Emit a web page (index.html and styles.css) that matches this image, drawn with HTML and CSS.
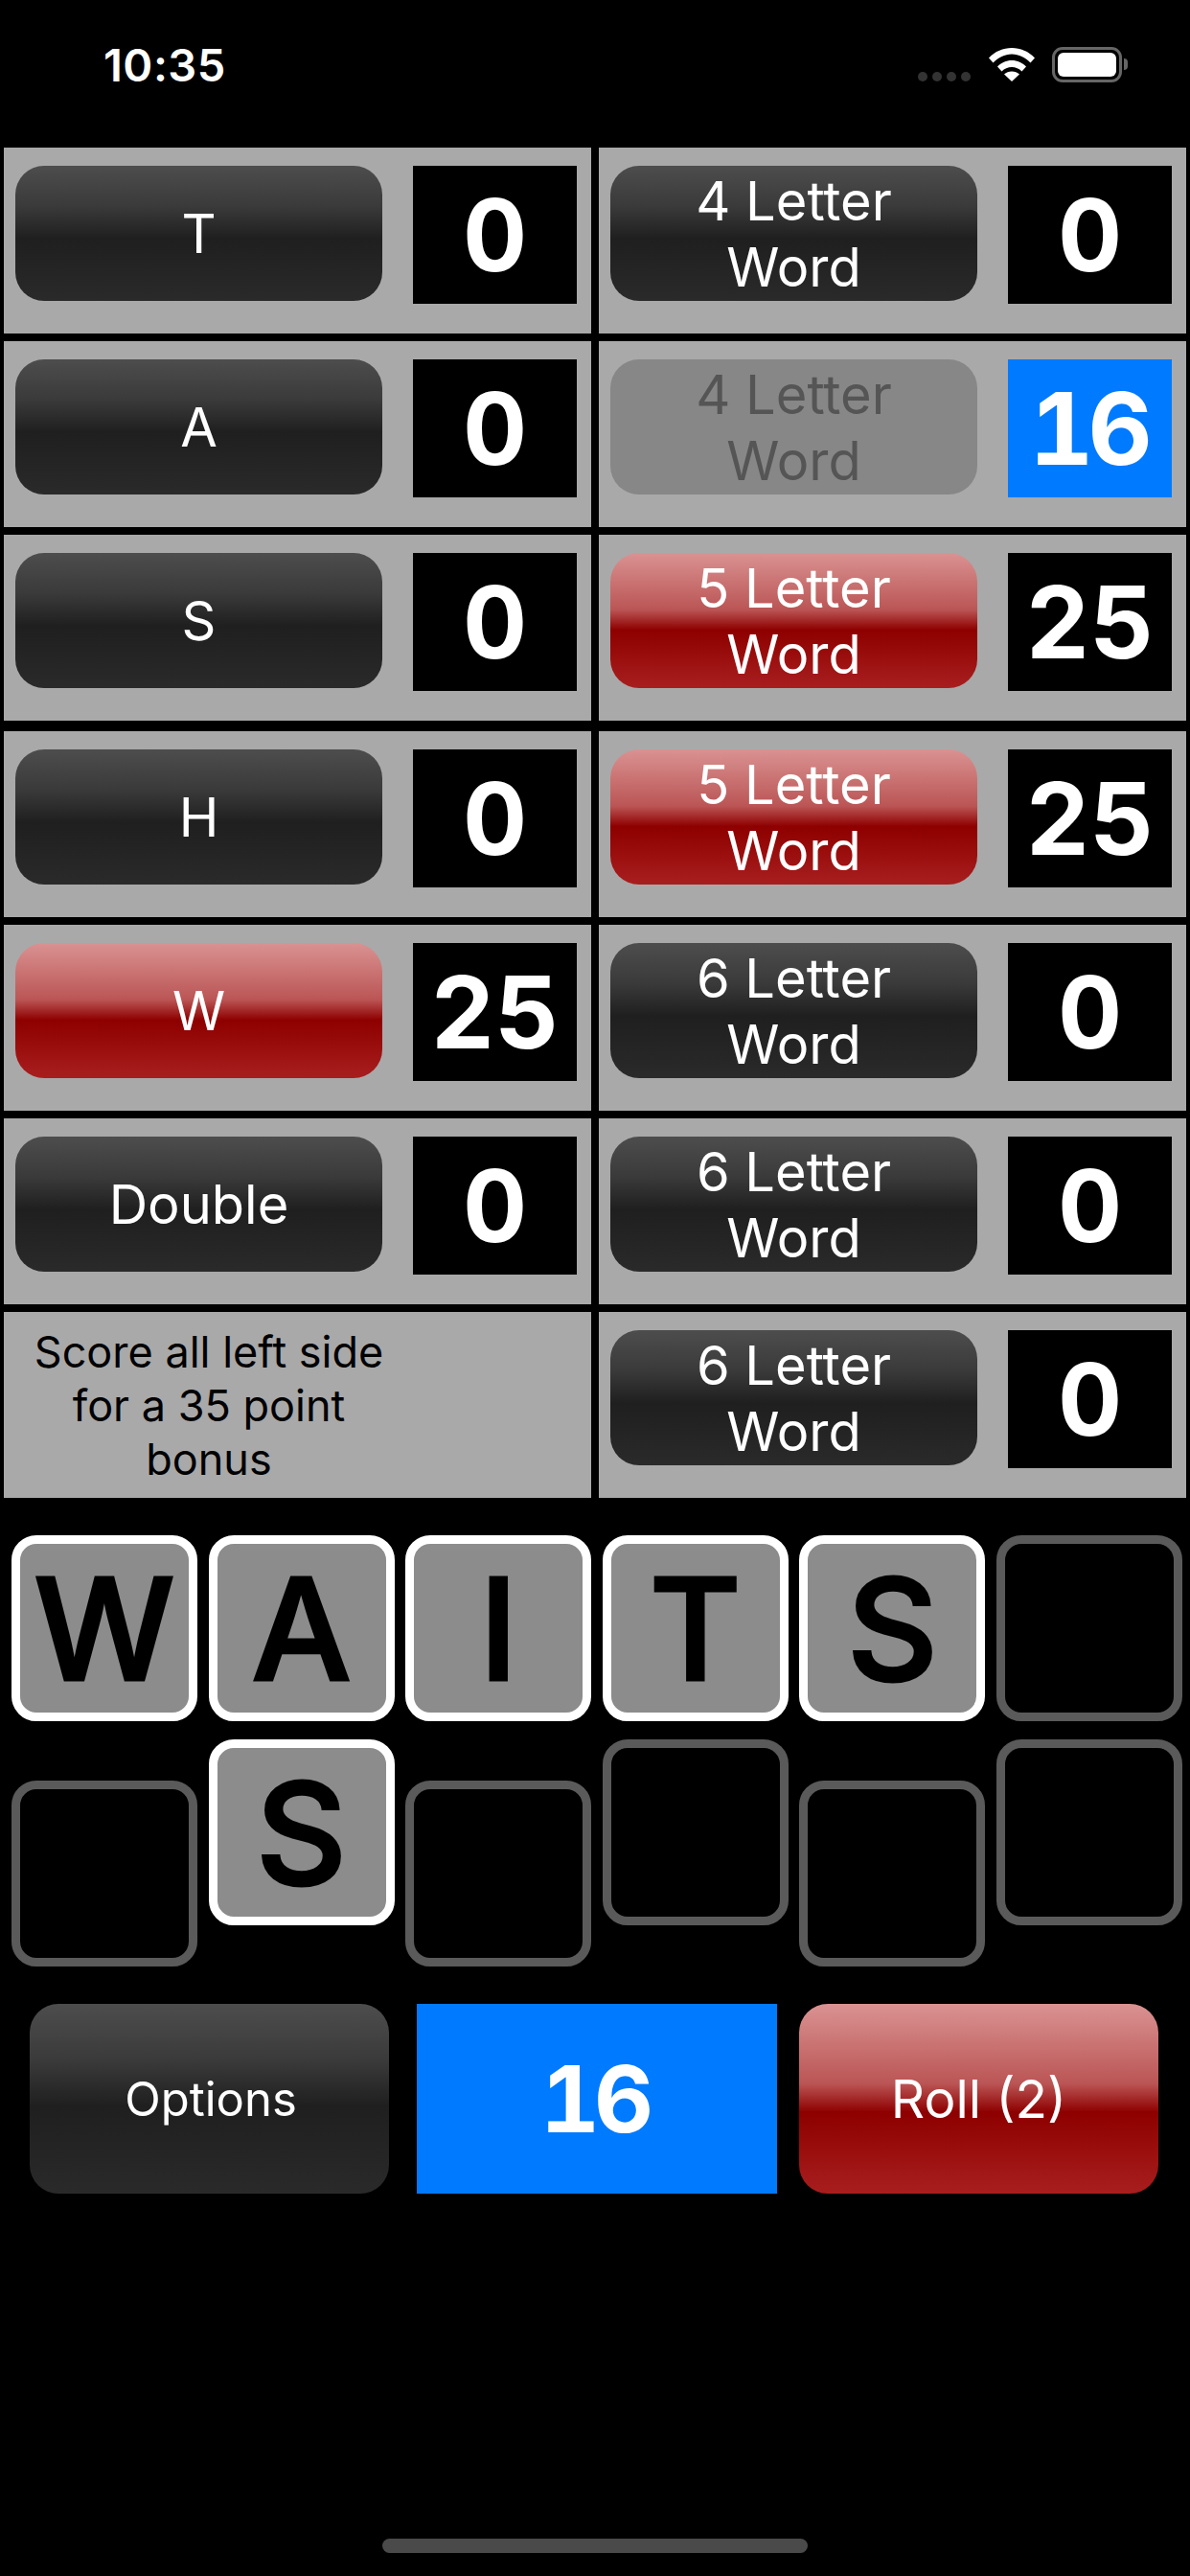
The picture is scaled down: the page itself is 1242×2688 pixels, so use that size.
FILE: index.html
```html
<!DOCTYPE html>
<html lang="en">
<head>
    <meta charset="UTF-8">
    <title>Dice Word Game</title>
    <link rel="stylesheet" href="styles.css">
</head>
<body>
    <header class="status-bar">
        <span class="clock">10:35</span>
        <div class="status-icons">
            <div class="signal"><i></i><i></i><i></i><i></i></div>
            <svg class="wifi" width="48" height="36" viewBox="0 0 48 36">
                <path d="M0 11.5C6.5 4.500 15 1 24 1s17.500 3.500 24 10.500l-4.500 5C38 11 31.500 7.500 24 7.500S10 11 4.500 16.500z" fill="#fff"/>
                <path d="M9 20.500c4-4 9.200-6.500 15-6.500s11 2.500 15 6.500l-4.500 5c-2.800-2.800-6.500-4.500-10.500-4.500s-7.700 1.700-10.500 4.500z" fill="#fff"/>
                <path d="M24 36l-8-7.500c2.200-2 5-3 8-3s5.800 1 8 3z" fill="#fff"/>
            </svg>
            <div class="battery"><div class="battery-level"></div></div>
            <div class="battery-cap"></div>
        </div>
    </header>

    <main class="board">
        <div class="cell"><button class="btn dark">T</button><div class="score">0</div></div>
        <div class="cell"><button class="btn dark">4 Letter<br>Word</button><div class="score">0</div></div>

        <div class="cell"><button class="btn dark">A</button><div class="score">0</div></div>
        <div class="cell"><button class="btn disabled">4 Letter<br>Word</button><div class="score blue">16</div></div>

        <div class="cell"><button class="btn dark">S</button><div class="score">0</div></div>
        <div class="cell"><button class="btn red">5 Letter<br>Word</button><div class="score">25</div></div>

        <div class="cell drop"><button class="btn dark">H</button><div class="score">0</div></div>
        <div class="cell drop"><button class="btn red">5 Letter<br>Word</button><div class="score">25</div></div>

        <div class="cell"><button class="btn red">W</button><div class="score">25</div></div>
        <div class="cell"><button class="btn dark">6 Letter<br>Word</button><div class="score">0</div></div>

        <div class="cell"><button class="btn dark">Double</button><div class="score">0</div></div>
        <div class="cell"><button class="btn dark">6 Letter<br>Word</button><div class="score">0</div></div>

        <div class="cell"><p class="bonus">Score all left side for a 35 point bonus</p></div>
        <div class="cell"><button class="btn dark">6 Letter<br>Word</button><div class="score">0</div></div>
    </main>

    <section class="tiles">
        <div class="tile on">W</div>
        <div class="tile on">A</div>
        <div class="tile on">I</div>
        <div class="tile on">T</div>
        <div class="tile on">S</div>
        <div class="tile"></div>
        <div class="tile low"></div>
        <div class="tile on">S</div>
        <div class="tile low"></div>
        <div class="tile"></div>
        <div class="tile low"></div>
        <div class="tile"></div>
    </section>

    <section class="controls">
        <button class="btn dark big options">Options</button>
        <div class="total">16</div>
        <button class="btn red big roll">Roll (2)</button>
    </section>

    <div class="home-bar"></div>
</body>
</html>
```

FILE: styles.css
```css
body {
    margin: 0;
    width: 1242px;
    height: 2688px;
    overflow: hidden;
    background-color: #000;
    font-family: Inter, "Liberation Sans", sans-serif;
    color: #fff;
}
button {
    font-family: inherit;
    border: none;
    padding: 0;
}

/* Status bar */
.status-bar {
    height: 154px;
    box-sizing: border-box;
    padding: 44px 65px 0 108px;
    display: flex;
    justify-content: space-between;
    align-items: flex-start;
}
.clock {
    font-size: 47px;
    font-weight: 600;
    line-height: 48px;
    letter-spacing: 0.5px;
}
.status-icons {
    display: flex;
    align-items: flex-start;
    padding-top: 5px;
}
.signal {
    display: flex;
    gap: 5px;
    margin: 26px 19px 0 0;
}
.signal i {
    width: 10px;
    height: 10px;
    border-radius: 50%;
    background-color: #333;
}
.battery {
    width: 73px;
    height: 37px;
    box-sizing: border-box;
    border: 3px solid #666;
    border-radius: 11px;
    padding: 3px;
    margin-left: 18px;
}
.battery-level {
    height: 100%;
    background-color: #fff;
    border-radius: 6px;
}
.battery-cap {
    width: 4px;
    height: 12px;
    margin: 12px 0 0 2px;
    background-color: #666;
    border-radius: 0 4px 4px 0;
}

/* Score board */
.board {
    display: grid;
    grid-template-columns: 613px 613px;
    grid-template-rows: 194px 194px 194px 197px 194px 194px 194px;
    column-gap: 8px;
    row-gap: 8px;
    padding-left: 4px;
}
.cell {
    background-color: #a9a9a9;
    display: flex;
    align-items: flex-start;
    padding: 19px 15px 0 12px;
}
.cell.drop {
    margin-top: 3px;
}
.btn {
    color: #fff;
    font-size: 56px;
    line-height: 69px;
    text-align: center;
}
.cell .btn {
    width: 383px;
    height: 141px;
    padding-top: 2px;
    border-radius: 30px;
}
.dark {
    background: linear-gradient(#4d4d4d, #3a3a3a 30%, #1f1f1f 54%, #2a2a2a);
}
.red {
    background: linear-gradient(#da9292, #bb5555 42%, #8e0000 57%, #a81e1e);
}
.disabled {
    background-color: #878787;
    color: #555;
}
.score {
    width: 171px;
    height: 144px;
    margin-left: 32px;
    background-color: #000;
    font-size: 104px;
    font-weight: 700;
    font-variant-numeric: tabular-nums;
    display: flex;
    align-items: center;
    justify-content: center;
}
.blue {
    background-color: #007aff;
    letter-spacing: -6px;
    box-sizing: border-box;
    padding-right: 4px;
}
.bonus {
    width: 400px;
    margin: -5px 0 0 2px;
    color: #000;
    font-size: 45px;
    line-height: 56px;
    text-align: center;
}

/* Letter tiles */
.tiles {
    display: grid;
    grid-template-columns: repeat(6, 194px);
    column-gap: 11.6px;
    row-gap: 19px;
    align-items: start;
    padding: 39px 0 0 12px;
}
.tile {
    height: 194px;
    box-sizing: border-box;
    border: 9px solid #5a5a5a;
    border-radius: 26px;
    display: flex;
    align-items: center;
    justify-content: center;
    color: #000;
    font-size: 147px;
    font-weight: 500;
    -webkit-text-stroke: 3px #000;
}
.tile.on {
    background-color: #8c8c8c;
    border-color: #fff;
}
.tile.low {
    margin-top: 43px;
}

/* Bottom controls */
.controls {
    display: flex;
    margin: 39px 0 0 31px;
}
.big {
    width: 375px;
    height: 198px;
    border-radius: 30px;
}
.options {
    font-size: 49px;
    padding-left: 3px;
}
.roll {
    font-size: 55px;
}
.total {
    width: 376px;
    height: 198px;
    box-sizing: border-box;
    padding-right: 6px;
    margin: 0 23px 0 29px;
    background-color: #007aff;
    font-size: 96px;
    font-weight: 700;
    font-variant-numeric: tabular-nums;
    letter-spacing: -6px;
    display: flex;
    align-items: center;
    justify-content: center;
}

.home-bar {
    width: 444px;
    height: 15px;
    margin: 360px 0 0 399px;
    background-color: #4a4a4a;
    border-radius: 8px;
}
```
